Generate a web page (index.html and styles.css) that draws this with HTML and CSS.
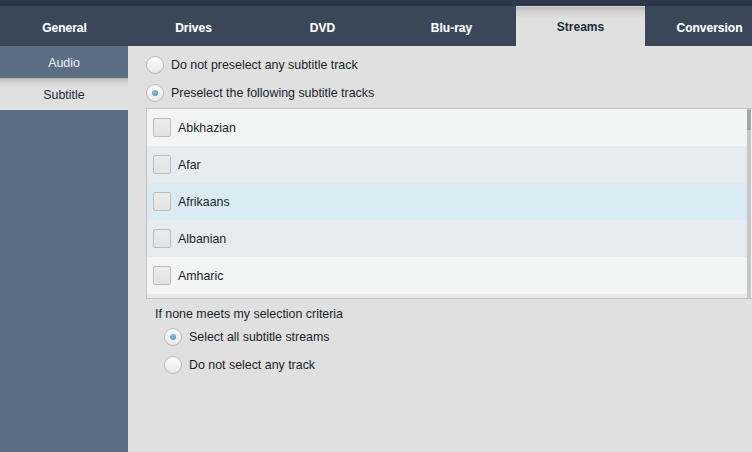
FILE: index.html
```html
<!DOCTYPE html>
<html>
<head>
<meta charset="utf-8">
<link rel="stylesheet" href="styles.css">
</head>
<body>
<div class="app">
  <div class="topstrip"></div>
  <div class="tabs">
    <div class="tab">General</div>
    <div class="tab">Drives</div>
    <div class="tab">DVD</div>
    <div class="tab">Blu-ray</div>
    <div class="tab active">Streams</div>
    <div class="tab">Conversion</div>
  </div>
  <div class="body">
    <div class="sidebar">
      <div class="side-item">Audio</div>
      <div class="side-item selected">Subtitle</div>
    </div>
    <div class="main">
      <div class="opt"><span class="radio"></span><span>Do not preselect any subtitle track</span></div>
      <div class="opt"><span class="radio on"></span><span>Preselect the following subtitle tracks</span></div>
      <div class="listbox">
        <div class="rows">
          <div class="row r1"><span class="check"></span><span>Abkhazian</span></div>
          <div class="row r2"><span class="check"></span><span>Afar</span></div>
          <div class="row hl"><span class="check"></span><span>Afrikaans</span></div>
          <div class="row r2"><span class="check"></span><span>Albanian</span></div>
          <div class="row r1"><span class="check"></span><span>Amharic</span></div>
          <div class="row r2"></div>
        </div>
        <div class="scrollbar"><div class="thumb"></div></div>
      </div>
      <div class="heading">If none meets my selection criteria</div>
      <div class="opt sub"><span class="radio on"></span><span>Select all subtitle streams</span></div>
      <div class="opt sub"><span class="radio"></span><span>Do not select any track</span></div>
    </div>
  </div>
</div>
</body>
</html>
```

FILE: styles.css
```css
html, body {
  margin: 0;
  padding: 0;
}
body {
  width: 752px;
  height: 452px;
  overflow: hidden;
  font-family: "Liberation Sans", Arial, sans-serif;
  font-size: 12px;
  color: #1b1f2b;
  background: #e0e0e0;
}
.app {
  display: flex;
  flex-direction: column;
  height: 452px;
}
.topstrip {
  height: 6px;
  background: #2d394a;
}
.tabs {
  display: flex;
  height: 40px;
  background: #3a4759;
  overflow: hidden;
}
.tab {
  flex: 0 0 129px;
  display: flex;
  align-items: center;
  justify-content: center;
  color: #ffffff;
  font-weight: bold;
  padding-top: 3px;
  box-sizing: border-box;
  text-shadow: 0 0 1px rgba(120, 170, 230, 0.5);
}
.tab.active {
  color: #1e2a3a;
  border-top: 1px solid #d6d6d6;
  background: linear-gradient(#bdbbb9 0, #d2d1d0 5px, #e0e0e0 11px, #e0e0e0 100%);
  padding-top: 0;
  text-shadow: none;
}
.body {
  flex: 1;
  display: flex;
  min-height: 0;
}
.sidebar {
  flex: 0 0 128px;
  background: #5b6e83;
  display: flex;
  flex-direction: column;
}
.side-item {
  height: 32px;
  box-sizing: border-box;
  padding-top: 2px;
  display: flex;
  align-items: center;
  justify-content: center;
  color: #eef3f8;
  font-size: 12.4px;
}
.side-item.selected {
  color: #1e2a3a;
  background: linear-gradient(#b9b8b6 0, #d3d2d1 4px, #e0e0e0 10px, #e0e0e0 100%);
}
.main {
  flex: 1;
  display: flex;
  flex-direction: column;
  padding: 5px 0 0 18px;
  min-width: 0;
  font-size: 12.4px;
}
.opt {
  height: 28px;
  flex: 0 0 28px;
  display: flex;
  align-items: center;
  gap: 7px;
}
.opt.sub {
  padding-left: 18px;
}
.radio {
  width: 18px;
  height: 18px;
  box-sizing: border-box;
  border-radius: 50%;
  border: 1px solid #b9b9b9;
  background: linear-gradient(#fbfbfb, #e9e9e9);
  position: relative;
  flex: 0 0 auto;
}
.radio.on::after {
  content: "";
  position: absolute;
  left: 5px;
  top: 5px;
  width: 6px;
  height: 6px;
  border-radius: 50%;
  background: radial-gradient(circle at 40% 35%, #8cc0ec, #4a8acb);
}
.listbox {
  margin-top: 1px;
  flex: 0 0 191px;
  height: 191px;
  width: 607px;
  box-sizing: border-box;
  border: 1px solid #c2c2c2;
  display: flex;
  overflow: hidden;
  background: #f3f4f4;
}
.rows {
  flex: 1;
  display: flex;
  flex-direction: column;
  overflow: hidden;
}
.row {
  flex: 0 0 37px;
  display: flex;
  align-items: center;
  gap: 7px;
  padding-left: 6px;
}
.r1 { background: #f3f4f4; }
.r2 { background: #e8ebee; }
.hl { background: #daebf3; }
.check {
  width: 18px;
  height: 19px;
  box-sizing: border-box;
  border: 1px solid #bcbcbc;
  border-radius: 2px;
  background: linear-gradient(#ececec, #e3e3e3);
}
.scrollbar {
  flex: 0 0 4px;
  background: #c6c6c6;
  margin-right: 1px;
  padding-top: 1px;
}
.thumb {
  height: 20px;
  background: #a3a3a3;
}
.heading {
  margin-top: 6px;
  padding-left: 9px;
  flex: 0 0 18px;
  height: 18px;
  line-height: 18px;
}
```
